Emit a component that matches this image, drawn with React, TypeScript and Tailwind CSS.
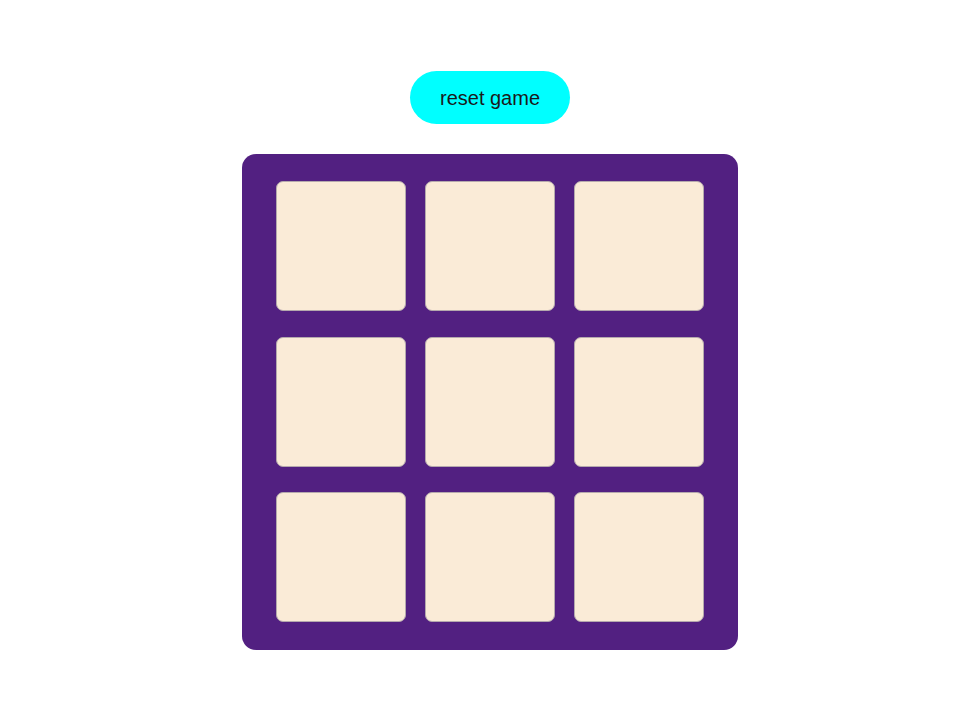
const cells = Array.from({ length: 9 }, (_, i) => i)

export default function App() {
  return (
    <div
      className="min-h-[716px] w-full bg-white flex flex-col items-center pt-[71px] pl-[26px]"
      style={{ fontFamily: '"Liberation Sans", Arial, sans-serif' }}
    >
      <button className="w-[160px] h-[53px] rounded-full bg-[#00ffff] text-[20px] text-[#1a1a1a] leading-none">
        reset game
      </button>

      {/* Board */}
      <div className="mt-[30px] w-[496px] h-[496px] rounded-[14px] bg-[#522081] grid grid-cols-[130px_130px_130px] grid-rows-[130px_130px_130px] gap-x-[19px] gap-y-[25.5px] pl-[34px] pt-[27px]">
        {cells.map((i) => (
          <div
            key={i}
            className="rounded-[7px] bg-[#faebd7] border border-[#b5a9ad]"
          />
        ))}
      </div>
    </div>
  )
}
